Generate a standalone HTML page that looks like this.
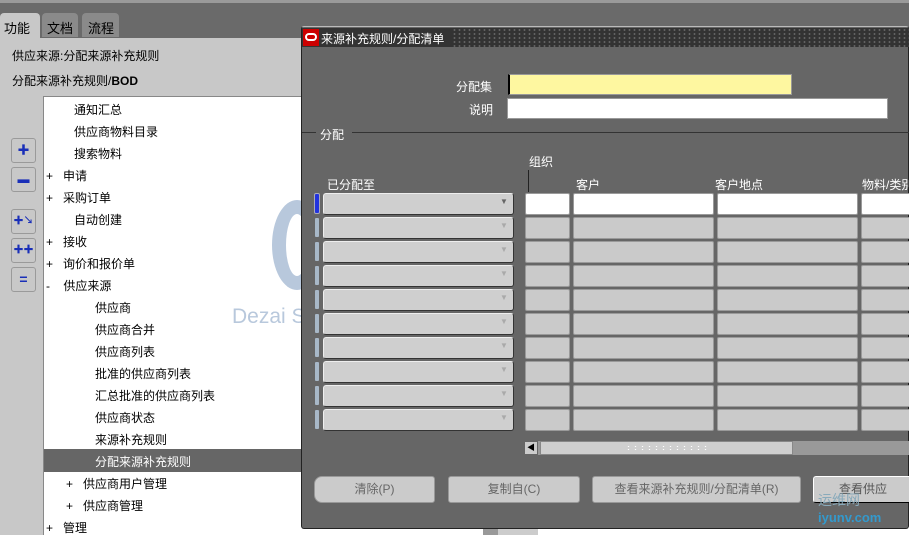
<!DOCTYPE html>
<html><head><meta charset="utf-8"><style>
*{margin:0;padding:0;box-sizing:border-box}
body{width:909px;height:535px;overflow:hidden;position:relative;background:#fff;font-family:"Liberation Sans","Noto Sans CJK SC",sans-serif;font-size:12px}
.a{position:absolute}
.t{position:absolute;white-space:nowrap;font-size:12px;color:#000}
.w{color:#fff}
.cb{position:absolute;background:#cfcfcf;border:1px solid #333;border-top-color:#eee;border-left-color:#eee;border-radius:3px}
.cell{position:absolute;background:#cacaca;border:1px solid #9a9a9a;border-radius:2px}
.btn{position:absolute;top:476px;height:27px;background:#cbcbcb;border:1px solid #999;border-radius:3px;color:#666;font-size:12px;text-align:center;line-height:25px}
.ib{position:absolute;left:11px;width:25px;height:25px;border:1px solid #9a9a9a;border-radius:3px;background:#c8c8c8;color:#1a2fb8;font-weight:bold;text-align:center;line-height:23px;font-size:12px}
</style></head><body>
<div class="a" style="left:0;top:0;width:909px;height:3px;background:#9a9a9a"></div>
<div class="a" style="left:0;top:3px;width:909px;height:35px;background:#6a6a6a"></div>
<div class="a" style="left:0;top:13px;width:40px;height:26px;background:#c8c8c8;border-radius:4px 4px 0 0"></div>
<div class="t" style="left:4px;top:18px;font-size:13px">功能</div>
<div class="a" style="left:42px;top:13px;width:36px;height:24px;background:#8a8a8a;border-radius:4px 4px 0 0"></div>
<div class="t" style="left:47px;top:18px;font-size:13px">文档</div>
<div class="a" style="left:82px;top:13px;width:37px;height:24px;background:#8a8a8a;border-radius:4px 4px 0 0"></div>
<div class="t" style="left:88px;top:18px;font-size:13px">流程</div>
<div class="a" style="left:0;top:38px;width:301px;height:497px;background:#c8c8c8"></div>
<div class="t" style="left:12px;top:47px">供应来源:分配来源补充规则</div>
<div class="t" style="left:12px;top:72px">分配来源补充规则/<b>BOD</b></div>
<div class="a" style="left:43px;top:96px;width:258px;height:439px;background:#fff;border-left:1px solid #888;border-top:1px solid #888"></div>
<div class="ib" style="top:138px">✚</div>
<div class="ib" style="top:167px">▬</div>
<div class="ib" style="top:209px;font-size:10px">✚↘</div>
<div class="ib" style="top:238px;font-size:10px">✚✚</div>
<div class="ib" style="top:267px;font-size:14px">=</div>
<div class="t" style="left:74px;top:101px">通知汇总</div>
<div class="t" style="left:74px;top:123px">供应商物料目录</div>
<div class="t" style="left:74px;top:145px">搜索物料</div>
<div class="t" style="left:46px;top:167px">+&nbsp;&nbsp;&nbsp;申请</div>
<div class="t" style="left:46px;top:189px">+&nbsp;&nbsp;&nbsp;采购订单</div>
<div class="t" style="left:74px;top:211px">自动创建</div>
<div class="t" style="left:46px;top:233px">+&nbsp;&nbsp;&nbsp;接收</div>
<div class="t" style="left:46px;top:255px">+&nbsp;&nbsp;&nbsp;询价和报价单</div>
<div class="t" style="left:46px;top:277px">-&nbsp;&nbsp;&nbsp;&nbsp;供应来源</div>
<div class="t" style="left:95px;top:299px">供应商</div>
<div class="t" style="left:95px;top:321px">供应商合并</div>
<div class="t" style="left:95px;top:343px">供应商列表</div>
<div class="t" style="left:95px;top:365px">批准的供应商列表</div>
<div class="t" style="left:95px;top:387px">汇总批准的供应商列表</div>
<div class="t" style="left:95px;top:409px">供应商状态</div>
<div class="t" style="left:95px;top:431px">来源补充规则</div>
<div class="a" style="left:44px;top:449px;width:257px;height:23px;background:#666"></div>
<div class="t w" style="left:95px;top:453px">分配来源补充规则</div>
<div class="t" style="left:66px;top:475px">+&nbsp;&nbsp;&nbsp;供应商用户管理</div>
<div class="t" style="left:66px;top:497px">+&nbsp;&nbsp;&nbsp;供应商管理</div>
<div class="t" style="left:46px;top:519px">+&nbsp;&nbsp;&nbsp;管理</div>
<div class="a" style="left:272px;top:200px;width:50px;height:90px;border:14px solid #b8c8dc;border-right-color:transparent;border-radius:50%"></div>
<div class="t" style="left:232px;top:305px;font-size:21px;color:#b8c8dc">Dezai Studio</div>
<div class="a" style="left:483px;top:528px;width:15px;height:7px;background:#999"></div>
<div class="a" style="left:498px;top:528px;width:40px;height:7px;background:#ccc"></div>
<div class="a" style="left:301px;top:26px;width:608px;height:503px;background:#666;border:1px solid #222;border-top-color:#bbb;border-radius:3px"></div>
<div class="a" style="left:302px;top:28px;width:607px;height:19px;background:#333;background-image:radial-gradient(#888 0.7px,transparent 1px);background-size:5px 4px"></div>
<div class="a" style="left:302px;top:28px;width:150px;height:19px;background:#333"></div>
<div class="a" style="left:303px;top:29px;width:16px;height:17px;background:#c00"></div>
<div class="a" style="left:305px;top:33px;width:12px;height:8px;border:2px solid #fff;border-radius:5px"></div>
<div class="t w" style="left:321px;top:30px">来源补充规则/分配清单</div>
<div class="t w" style="left:456px;top:78px">分配集</div>
<div class="a" style="left:508px;top:74px;width:284px;height:21px;background:#fef7a0;border:1px solid #999;border-left:2px solid #000"></div>
<div class="t w" style="left:469px;top:101px">说明</div>
<div class="a" style="left:507px;top:98px;width:381px;height:21px;background:#fff;border:1px solid #999"></div>
<div class="a" style="left:302px;top:132px;width:607px;height:1px;background:#333"></div>
<div class="a" style="left:316px;top:125px;width:36px;height:14px;background:#666"></div>
<div class="t w" style="left:320px;top:126px">分配</div>
<div class="t w" style="left:529px;top:153px">组织</div>
<div class="a" style="left:528px;top:170px;width:1px;height:22px;background:#222"></div>
<div class="t w" style="left:327px;top:176px">已分配至</div>
<div class="t w" style="left:576px;top:176px">客户</div>
<div class="t w" style="left:715px;top:176px">客户地点</div>
<div class="t w" style="left:862px;top:176px">物料/类别</div>
<div id="rows"></div>
<script>
var h='';for(var i=0;i<10;i++){var y=193+i*24;var f=i==0;
h+='<div class="a" style="left:314px;top:'+y+'px;width:6px;height:21px;border-radius:2px;background:'+(f?'#2233dd':'#a8b8c8')+';border:1px solid '+(f?'#aab':'#666')+'"></div>';
h+='<div class="cb" style="left:323px;top:'+y+'px;width:191px;height:22px"></div><div class="t" style="left:500px;top:'+(y+4)+'px;font-size:8px;color:'+(f?'#666':'#aaa')+'">▼</div>';
var bg=f?'#fff':'#cacaca';
h+='<div class="cell" style="left:525px;top:'+y+'px;width:45px;height:22px;background:'+bg+'"></div>';
h+='<div class="cell" style="left:573px;top:'+y+'px;width:141px;height:22px;background:'+bg+'"></div>';
h+='<div class="cell" style="left:717px;top:'+y+'px;width:141px;height:22px;background:'+bg+'"></div>';
h+='<div class="cell" style="left:861px;top:'+y+'px;width:60px;height:22px;background:'+bg+'"></div>';}
document.getElementById('rows').innerHTML=h;
</script>
<div class="a" style="left:524px;top:441px;width:385px;height:14px;background:#999"></div>
<div class="a" style="left:524px;top:441px;width:14px;height:14px;background:#ccc;border:1px solid #666;font-size:8px;line-height:12px;text-align:center">◀</div>
<div class="a" style="left:540px;top:441px;width:253px;height:14px;background:#cfcfcf;border:1px solid #888"></div>
<div class="a" style="left:625px;top:445px;width:82px;height:6px;background-image:radial-gradient(#fff 0.8px,transparent 1px);background-size:7px 3px"></div>
<div class="btn" style="left:314px;width:121px;border-radius:8px 3px 3px 8px">清除(P)</div>
<div class="btn" style="left:448px;width:132px">复制自(C)</div>
<div class="btn" style="left:592px;width:209px">查看来源补充规则/分配清单(R)</div>
<div class="btn" style="left:813px;width:100px;border:1px solid #000;border-top-color:#fff;border-left-color:#fff;color:#555">查看供应</div>
<div class="t" style="left:818px;top:490px;font-size:14px;color:#8ab;">运维网</div>
<div class="t" style="left:818px;top:510px;font-size:13px;font-weight:bold;color:#39c">iyunv.com</div>
</body></html>
